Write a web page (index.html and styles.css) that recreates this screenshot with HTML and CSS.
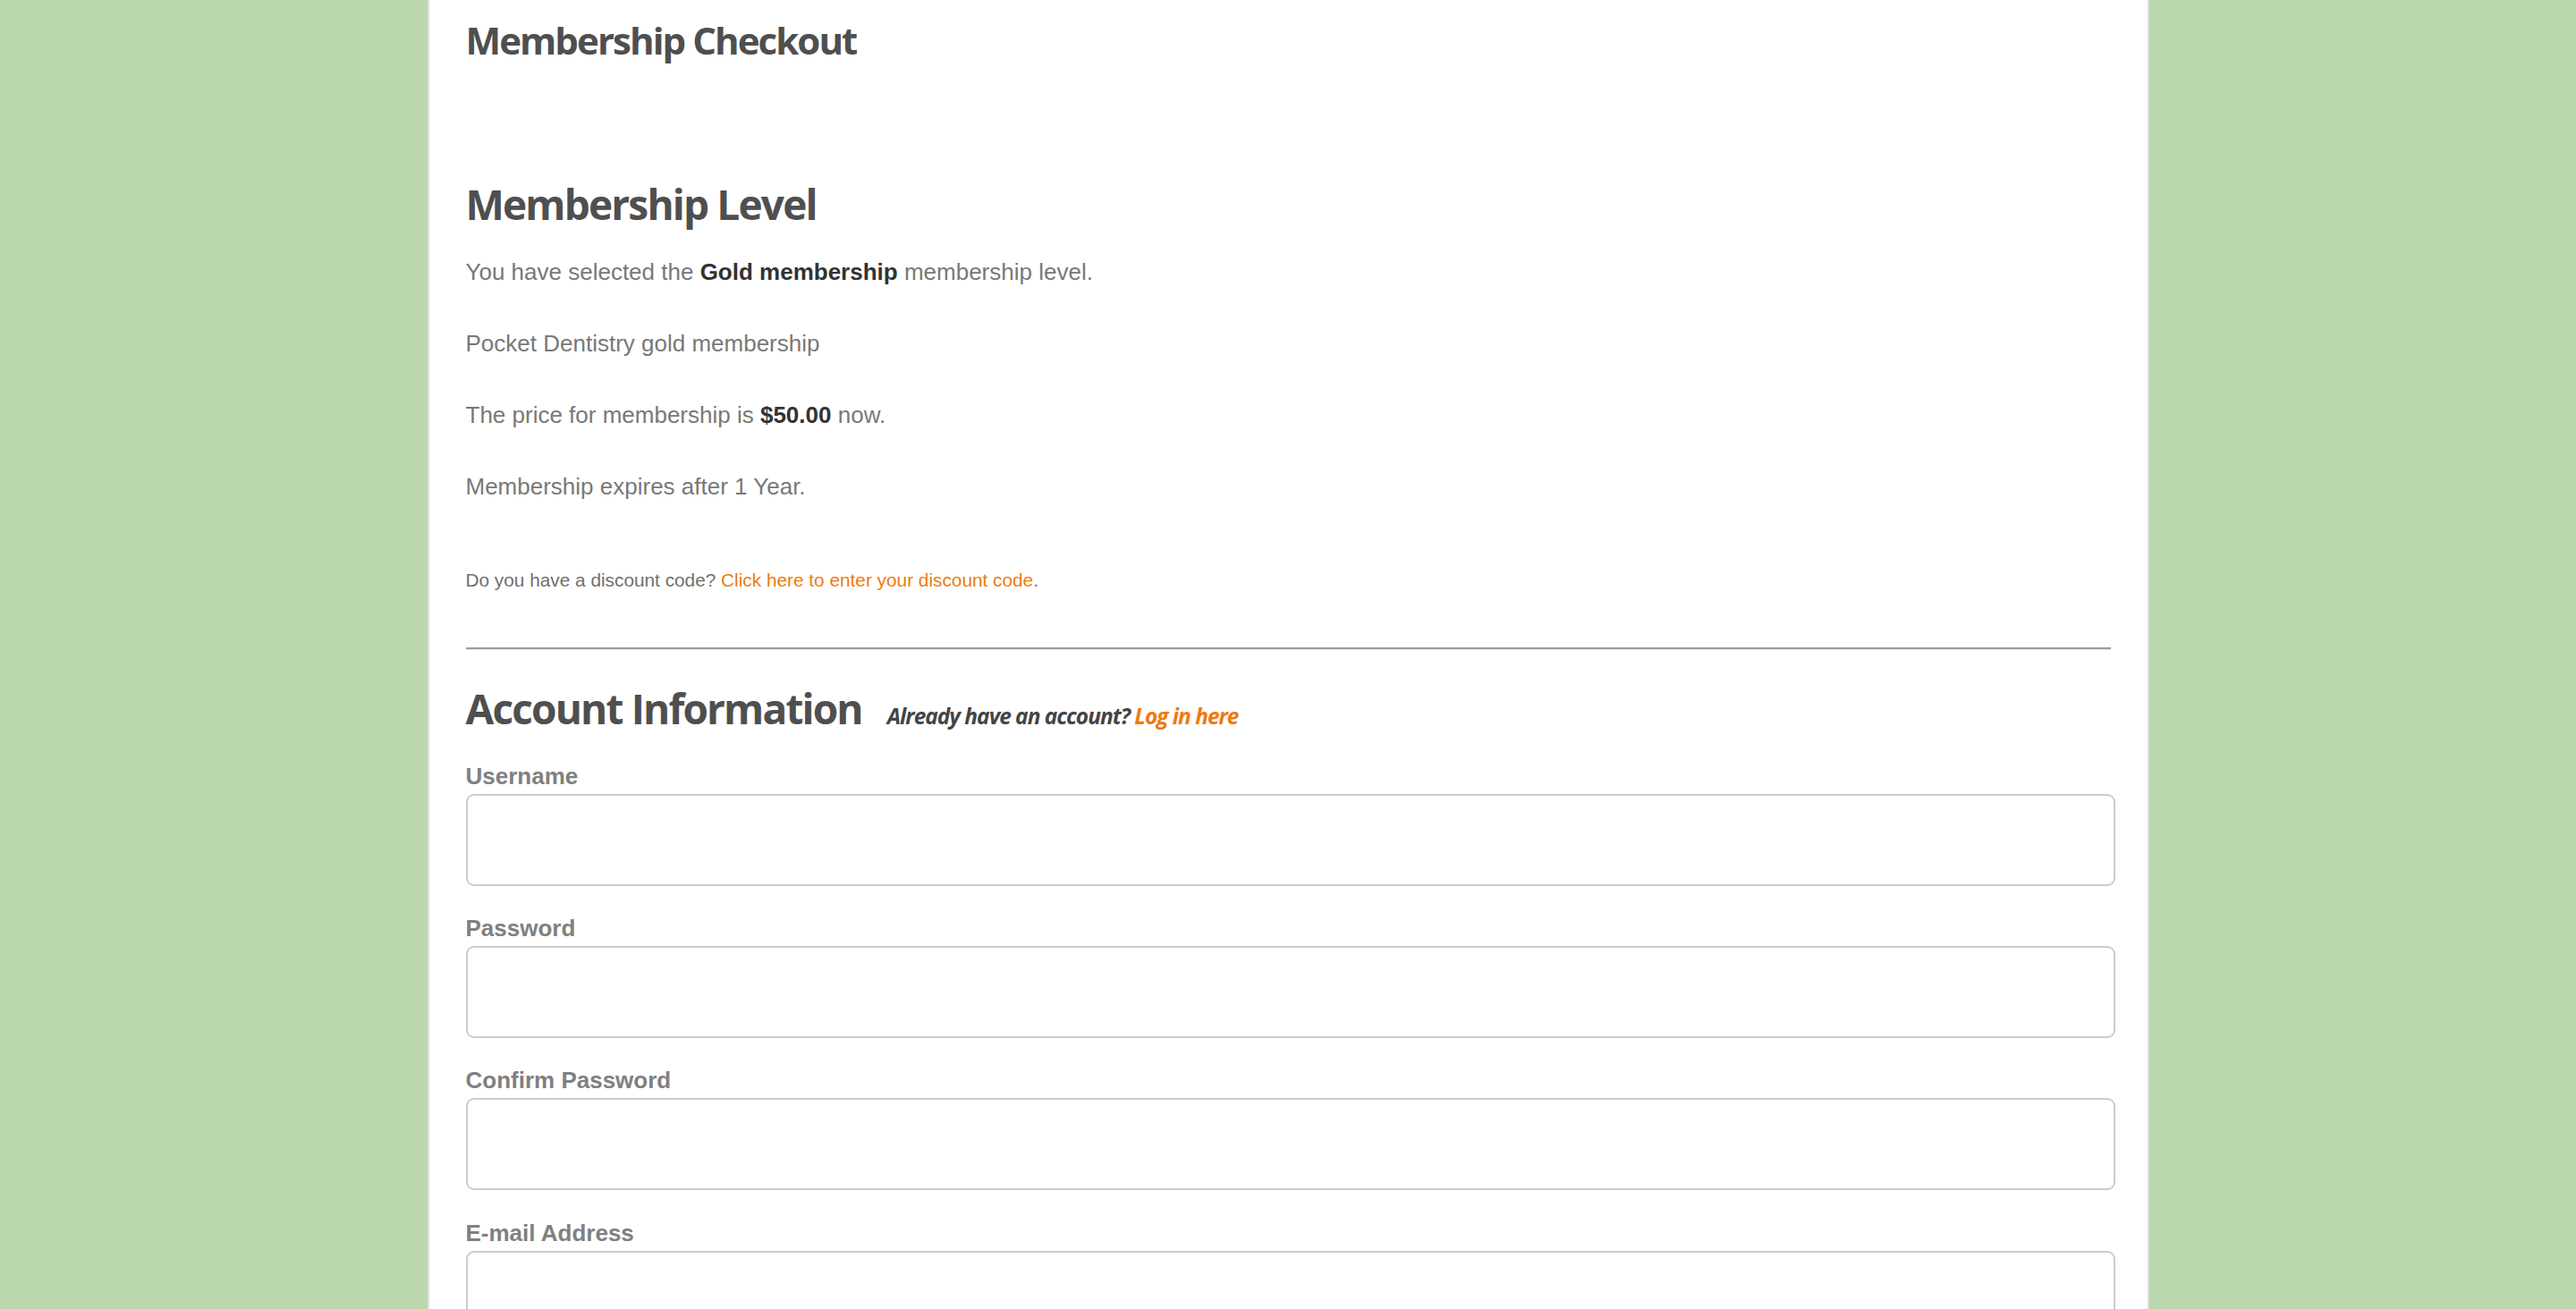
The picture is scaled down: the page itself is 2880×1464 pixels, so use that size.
FILE: index.html
```html
<!DOCTYPE html>
<html lang="en">
<head>
<meta charset="utf-8">
<title>Membership Checkout</title>
<link rel="stylesheet" href="styles.css">
</head>
<body>
<div class="page">
  <main class="panel">
    <h1 class="page-title">Membership Checkout</h1>

    <section class="level">
      <h2 class="level-title">Membership Level</h2>
      <p class="info">You have selected the <strong>Gold membership</strong> membership level.</p>
      <p class="info">Pocket Dentistry gold membership</p>
      <p class="info">The price for membership is <strong>$50.00</strong> now.</p>
      <p class="info">Membership expires after 1 Year.</p>
      <p class="discount">Do you have a discount code? <a href="#" class="link">Click here to enter your discount code</a>.</p>
    </section>

    <hr class="divider">

    <section class="account">
      <div class="account-head">
        <h2 class="account-title">Account Information</h2>
        <span class="login-note">Already have an account? <a href="#" class="link">Log in here</a></span>
      </div>
      <div class="field">
        <label class="field-label">Username</label>
        <div class="field-input"></div>
      </div>
      <div class="field">
        <label class="field-label">Password</label>
        <div class="field-input"></div>
      </div>
      <div class="field">
        <label class="field-label">Confirm Password</label>
        <div class="field-input"></div>
      </div>
      <div class="field">
        <label class="field-label">E-mail Address</label>
        <div class="field-input"></div>
      </div>
    </section>
  </main>
</div>
</body>
</html>
```

FILE: styles.css
```css
html, body {
  margin: 0;
  padding: 0;
}
body {
  background: #bbd7ad;
  font-family: "Liberation Sans", Arial, sans-serif;
  overflow: hidden;
}
.page {
  display: flex;
  justify-content: center;
}
.panel {
  min-height: 1600px;
  background: #ffffff;
  border-left: 2px solid #dedede;
  border-right: 2px solid #dedede;
  padding: 20px 36px 0 41px;
  box-sizing: content-box;
  width: 1844px;
}
.page-title {
  margin: 0;
  font-family: "Open Sans", sans-serif;
  font-weight: 700;
  font-size: 42px;
  line-height: 50px;
  letter-spacing: -0.046em;
  color: #4f4f4f;
}
.level {
  margin-top: 131px;
}
.level-title {
  margin: 0 0 34px;
  font-family: "Open Sans", sans-serif;
  font-weight: 700;
  font-size: 46px;
  line-height: 54px;
  letter-spacing: -0.04em;
  color: #4f4f4f;
}
.info {
  margin: 0 0 50px;
  font-size: 26px;
  line-height: 30px;
  color: #787878;
}
.info:last-of-type {
  margin-bottom: 0;
}
.info strong {
  color: #333333;
  font-weight: 700;
}
.discount {
  margin: 75px 0 0;
  font-size: 20.8px;
  line-height: 30px;
  color: #6f6f6f;
}
.link {
  color: #ef7a0e;
  text-decoration: none;
}
.divider {
  margin: 60px 5px 0 0;
  height: 0;
  border: 0;
  border-top: 2px solid #9b9b9b;
  border-bottom: 1px solid #e6e6e6;
}
.account {
  margin-top: 37px;
}
.account-head {
  display: flex;
  align-items: baseline;
  gap: 28px;
  margin-bottom: 33px;
}
.account-title {
  margin: 0;
  font-family: "Open Sans", sans-serif;
  font-weight: 700;
  font-size: 46px;
  line-height: 56px;
  letter-spacing: -0.04em;
  color: #4f4f4f;
}
.login-note {
  font-family: "Open Sans", sans-serif;
  font-style: italic;
  font-weight: 700;
  font-size: 24.4px;
  letter-spacing: -0.04em;
  color: #444444;
}
.field {
  display: flex;
  flex-direction: column;
  gap: 5px;
  margin-bottom: 32.2px;
}
.field-label {
  font-weight: 700;
  font-size: 26px;
  line-height: 30px;
  color: #808080;
}
.field-input {
  height: 103px;
  box-sizing: border-box;
  border: 2px solid #cccccc;
  border-radius: 9px;
  background: #ffffff;
}
```
